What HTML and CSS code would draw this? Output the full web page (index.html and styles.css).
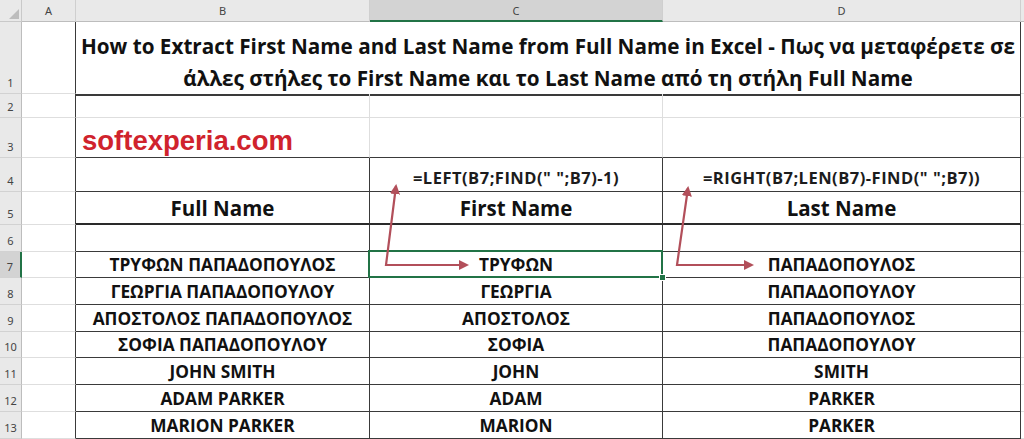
FILE: index.html
```html
<!DOCTYPE html>
<html lang="el">
<head>
<meta charset="utf-8">
<title>Extract First Name and Last Name</title>
<link rel="stylesheet" href="styles.css">
</head>
<body>
<div class="sheet">
  <div class="grid">
    <div class="corner"><svg class="corner-tri" width="12" height="12" viewBox="0 0 12 12"><polygon points="11,1 11,11 1,11" fill="#bdbdbd"/></svg></div>
    <div class="ch">A</div>
    <div class="ch">B</div>
    <div class="ch ch-sel">C</div>
    <div class="ch">D</div>
    <div class="ch ch-e"></div>

    <div class="rh">1</div>
    <div class="c edge"></div>
    <div class="c title span3 r1 rb">How to Extract First Name and Last Name from Full Name in Excel - Πως να μεταφέρετε σε<br>άλλες στήλες το First Name και το Last Name από τη στήλη Full Name</div>
    <div class="c e"></div>

    <div class="rh">2</div>
    <div class="c edge"></div>
    <div class="c"></div>
    <div class="c"></div>
    <div class="c rb"></div>
    <div class="c e"></div>

    <div class="rh">3</div>
    <div class="c edge"></div>
    <div class="c brand bb">softexperia.com</div>
    <div class="c bb"></div>
    <div class="c bb rb"></div>
    <div class="c e"></div>

    <div class="rh">4</div>
    <div class="c edge"></div>
    <div class="c box"></div>
    <div class="c box formula">=LEFT(B7;FIND(" ";B7)-1)</div>
    <div class="c box formula">=RIGHT(B7;LEN(B7)-FIND(" ";B7))</div>
    <div class="c e"></div>

    <div class="rh">5</div>
    <div class="c edge"></div>
    <div class="c box thick hdr">Full Name</div>
    <div class="c box thick hdr">First Name</div>
    <div class="c box thick hdr">Last Name</div>
    <div class="c e"></div>

    <div class="rh">6</div>
    <div class="c edge"></div>
    <div class="c box"></div>
    <div class="c box"></div>
    <div class="c box"></div>
    <div class="c e"></div>

    <div class="rh rh-sel">7</div>
    <div class="c edge"></div>
    <div class="c box data">ΤΡΥΦΩΝ ΠΑΠΑΔΟΠΟΥΛΟΣ</div>
    <div class="c box data selected">ΤΡΥΦΩΝ</div>
    <div class="c box data">ΠΑΠΑΔΟΠΟΥΛΟΣ</div>
    <div class="c e"></div>

    <div class="rh">8</div>
    <div class="c edge"></div>
    <div class="c box data">ΓΕΩΡΓΙΑ ΠΑΠΑΔΟΠΟΥΛΟΥ</div>
    <div class="c box data">ΓΕΩΡΓΙΑ</div>
    <div class="c box data">ΠΑΠΑΔΟΠΟΥΛΟΥ</div>
    <div class="c e"></div>

    <div class="rh">9</div>
    <div class="c edge"></div>
    <div class="c box data">ΑΠΟΣΤΟΛΟΣ ΠΑΠΑΔΟΠΟΥΛΟΣ</div>
    <div class="c box data">ΑΠΟΣΤΟΛΟΣ</div>
    <div class="c box data">ΠΑΠΑΔΟΠΟΥΛΟΣ</div>
    <div class="c e"></div>

    <div class="rh">10</div>
    <div class="c edge"></div>
    <div class="c box data">ΣΟΦΙΑ ΠΑΠΑΔΟΠΟΥΛΟΥ</div>
    <div class="c box data">ΣΟΦΙΑ</div>
    <div class="c box data">ΠΑΠΑΔΟΠΟΥΛΟΥ</div>
    <div class="c e"></div>

    <div class="rh">11</div>
    <div class="c edge"></div>
    <div class="c box data">JOHN SMITH</div>
    <div class="c box data">JOHN</div>
    <div class="c box data">SMITH</div>
    <div class="c e"></div>

    <div class="rh">12</div>
    <div class="c edge"></div>
    <div class="c box data">ADAM PARKER</div>
    <div class="c box data">ADAM</div>
    <div class="c box data">PARKER</div>
    <div class="c e"></div>

    <div class="rh">13</div>
    <div class="c edge"></div>
    <div class="c box data">MARION PARKER</div>
    <div class="c box data">MARION</div>
    <div class="c box data">PARKER</div>
    <div class="c e"></div>
  </div>

  <svg class="arrows" width="1024" height="439" viewBox="0 0 1024 439">
    <defs>
      <marker id="head" viewBox="0 0 10 10" refX="8" refY="5" markerWidth="4.6" markerHeight="4.6" orient="auto-start-reverse" markerUnits="strokeWidth">
        <path d="M0,0 L10,5 L0,10 Z" fill="#b24f5a"/>
      </marker>
    </defs>
    <polyline points="396,186 386,265 467,265" fill="none" stroke="#b24f5a" stroke-width="2.2" stroke-linejoin="miter" marker-start="url(#head)" marker-end="url(#head)"/>
    <polyline points="688,188 677,265 752,265" fill="none" stroke="#b24f5a" stroke-width="2.2" stroke-linejoin="miter" marker-start="url(#head)" marker-end="url(#head)"/>
  </svg>
</div>
</body>
</html>
```

FILE: styles.css
```css
html, body {
  margin: 0;
  padding: 0;
  background: #ffffff;
}

.sheet {
  position: relative;
  width: 1024px;
  height: 439px;
  overflow: hidden;
  font-family: "Open Sans", "Noto Sans", sans-serif;
  color: #111111;
}

.grid {
  display: grid;
  grid-template-columns: 22px 54px 294px 293px 358px 3px;
  grid-template-rows: 22px 72px 24px 40px 34px 33px 27px 26px 27px 27px 26px 27px 27px 27px;
}

.grid > div {
  box-sizing: border-box;
  min-width: 0;
}

/* headers */
.corner {
  background: #e9e9e9;
  border-right: 1px solid #c9c9c9;
  border-bottom: 1px solid #c9c9c9;
  display: flex;
  align-items: flex-end;
  justify-content: flex-end;
}
.corner-tri {
  display: block;
  margin: 0 1px 1px 0;
}

.ch {
  background: #e9e9e9;
  border-right: 1px solid #cfcfcf;
  border-bottom: 1px solid #bdbdbd;
  color: #444444;
  font-family: "Noto Sans", sans-serif;
  font-size: 11px;
  display: flex;
  align-items: center;
  justify-content: center;
}
.ch-sel {
  background: #d3d3d3;
  border-bottom: 2px solid #217346;
}
.ch-e {
  border-right: none;
}

.rh {
  background: #e9e9e9;
  border-right: 1px solid #bdbdbd;
  border-bottom: 1px solid #d2d2d2;
  color: #444444;
  font-family: "Noto Sans", sans-serif;
  font-size: 11px;
  display: flex;
  align-items: flex-end;
  justify-content: center;
  padding-bottom: 3px;
}
.rh-sel {
  background: #d3d3d3;
  border-right: 2px solid #217346;
}

/* cells */
.c {
  border-right: 1px solid #dedede;
  border-bottom: 1px solid #dedede;
  display: flex;
  align-items: flex-end;
  justify-content: center;
  white-space: nowrap;
}
.e {
  border-right: none;
}
.edge {
  border-right: 1px solid #3a3a3a;
}
.span3 {
  grid-column: span 3;
}
.r1 {
  border-bottom: 2px solid #3a3a3a;
}
.rb {
  border-right: 1px solid #3a3a3a;
}
.bb {
  border-bottom: 1px solid #3a3a3a;
}
.box {
  border-right: 1px solid #3a3a3a;
  border-bottom: 1px solid #3a3a3a;
}
.thick {
  border-bottom: 2px solid #2a2a2a;
}

.title {
  font-weight: 700;
  font-size: 20.7px;
  line-height: 32px;
  text-align: center;
  padding-bottom: 0;
  margin-bottom: -2px;
}

.brand {
  justify-content: flex-start;
  font-family: "Liberation Sans", Arial, sans-serif;
  font-weight: 700;
  font-size: 27.5px;
  color: #d0232d;
  padding-left: 6px;
  padding-bottom: 0;
  line-height: 32px;
  overflow: visible;
}

.formula {
  font-weight: 700;
  font-size: 16.5px;
  letter-spacing: 0.5px;
  line-height: 22px;
  padding-bottom: 2px;
  color: #1c1c1c;
}

.hdr {
  font-weight: 700;
  font-size: 20.5px;
  line-height: 26px;
  padding-bottom: 2px;
}

.data {
  font-weight: 700;
  font-size: 17.3px;
  line-height: 22px;
  padding-bottom: 1px;
}

/* selection */
.selected {
  position: relative;
}
.selected::after {
  content: "";
  position: absolute;
  left: -2px;
  top: -2px;
  right: -1px;
  bottom: -1px;
  border: 2px solid #217346;
  pointer-events: none;
}
.selected::before {
  content: "";
  position: absolute;
  right: -4px;
  bottom: -4px;
  width: 5px;
  height: 5px;
  background: #217346;
  border: 1px solid #ffffff;
  z-index: 2;
}

.arrows {
  position: absolute;
  left: 0;
  top: 0;
  pointer-events: none;
}
```
